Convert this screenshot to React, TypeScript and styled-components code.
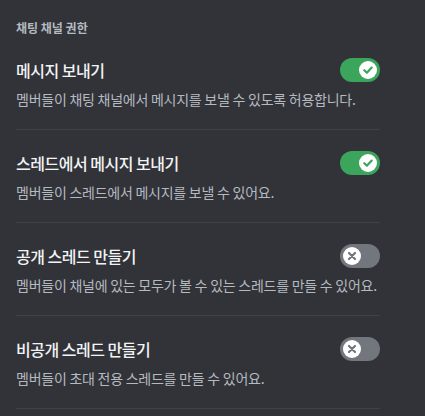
import React from "react";
import styled, { createGlobalStyle } from "styled-components";

const Global = createGlobalStyle`
  html, body { margin: 0; padding: 0; background: #313338; }
  body { font-family: "Noto Sans CJK KR", "Noto Sans", sans-serif; }
`;

const Page = styled.div`
  width: 425px;
  height: 416px;
  background: #313338;
  padding: 20px 0 0 16px;
  box-sizing: border-box;
  overflow: hidden;
`;

const Section = styled.div`
  width: 364px;
`;

const Header = styled.h2`
  margin: 0 0 1px;
  font-size: 12px;
  line-height: 16px;
  font-weight: 700;
  color: #b5bac1;
`;

const Item = styled.div`
  padding: 21px 0 20px;
  border-bottom: 1px solid #3f4147;
`;

const Row = styled.div`
  display: flex;
  align-items: center;
  justify-content: space-between;
  height: 24px;
`;

const Title = styled.div`
  font-size: 16px;
  line-height: 24px;
  font-weight: 500;
  letter-spacing: -0.5px;
  color: #f2f3f5;
`;

const Desc = styled.div`
  margin-top: 7px;
  font-size: 14px;
  line-height: 20px;
  letter-spacing: -0.25px;
  white-space: nowrap;
  color: #b5bac1;
`;

const Track = styled.div<{ $on: boolean }>`
  width: 40px;
  height: 24px;
  border-radius: 12px;
  background: ${(p) => (p.$on ? "#3ba55c" : "#72767d")};
  display: flex;
  align-items: center;
  justify-content: ${(p) => (p.$on ? "flex-end" : "flex-start")};
  padding: 0 3px;
  box-sizing: border-box;
  flex-shrink: 0;
`;

const Knob = styled.div`
  width: 18px;
  height: 18px;
  border-radius: 50%;
  background: #ffffff;
  display: flex;
  align-items: center;
  justify-content: center;
`;

function Toggle({ on }: { on: boolean }) {
  return (
    <Track $on={on}>
      <Knob>
        {on ? (
          <svg width="12" height="12" viewBox="0 0 12 12">
            <path d="M2.3 6.2 L4.9 8.7 L9.7 3.6" fill="none" stroke="#3ba55c" strokeWidth="2.2" strokeLinecap="round" strokeLinejoin="round" />
          </svg>
        ) : (
          <svg width="12" height="12" viewBox="0 0 12 12">
            <path d="M3 3 L9 9 M9 3 L3 9" fill="none" stroke="#72767d" strokeWidth="2.2" strokeLinecap="round" />
          </svg>
        )}
      </Knob>
    </Track>
  );
}

const items = [
  { title: "메시지 보내기", desc: "멤버들이 채팅 채널에서 메시지를 보낼 수 있도록 허용합니다.", on: true },
  { title: "스레드에서 메시지 보내기", desc: "멤버들이 스레드에서 메시지를 보낼 수 있어요.", on: true },
  { title: "공개 스레드 만들기", desc: "멤버들이 채널에 있는 모두가 볼 수 있는 스레드를 만들 수 있어요.", on: false },
  { title: "비공개 스레드 만들기", desc: "멤버들이 초대 전용 스레드를 만들 수 있어요.", on: false },
];

export default function App() {
  return (
    <>
      <Global />
      <Page>
        <Section>
          <Header>채팅 채널 권한</Header>
          {items.map((it) => (
            <Item key={it.title}>
              <Row>
                <Title>{it.title}</Title>
                <Toggle on={it.on} />
              </Row>
              <Desc>{it.desc}</Desc>
            </Item>
          ))}
        </Section>
      </Page>
    </>
  );
}
